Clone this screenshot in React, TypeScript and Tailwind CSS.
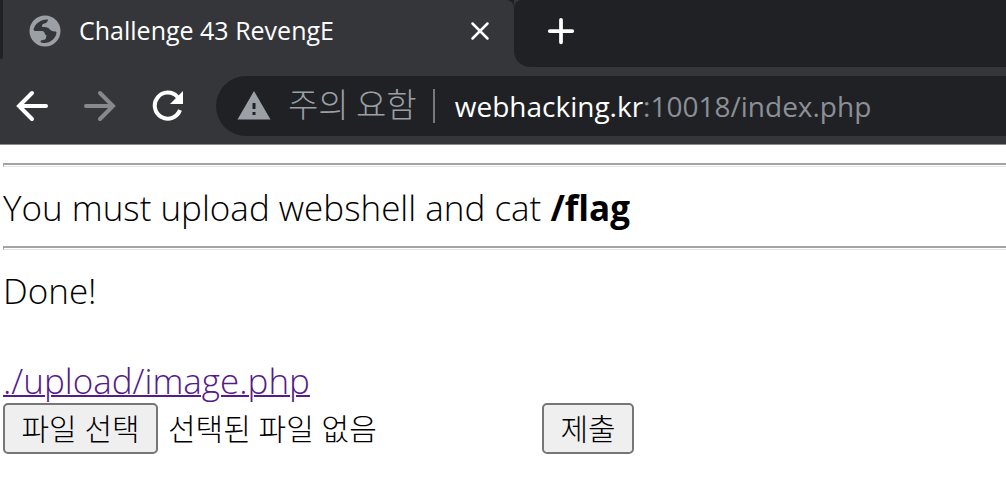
import { useRef, useState } from "react";
import { MdWarning } from "react-icons/md";

function Globe() {
  return (
    <svg viewBox="0 0 32 32" className="size-8 shrink-0" aria-hidden="true">
      <circle cx="16" cy="16" r="15.5" fill="#9aa0a6" />
      <g fill="#35363a">
        <path d="M19 4.500C12 4 6 8.500 4.500 14.500l1 1.500h7.500c2 0 2.500 1.500 3 3 .5 1.500 2 2 4 1.500 2-.3 4-1.500 7-1.500v-2.500c-2.500 0-5-.5-6-2-1.500-2-4-2.500-7-2.500-1.500 0-1.500-2 0-3 1.500-1 4.500-.5 5-4.500z" />
        <path d="M27.500 17c0 6-6 11-12 11-1.500 0-4-.5-4-1.500 0-1.500 3-1.500 4.500-2s.5-3 2-4.500z" />
      </g>
    </svg>
  );
}

function Icon({ d, className }: { d: string; className: string }) {
  return (
    <svg viewBox="0 0 32 32" className={className} fill="none" stroke="currentColor" strokeWidth="4" aria-hidden="true">
      <path d={d} strokeLinecap="round" />
    </svg>
  );
}

function Reload() {
  return (
    <svg viewBox="0 0 32 32" className="size-8" aria-hidden="true">
      <path d="M28 20A13 13 0 1 1 25.500 7" fill="none" stroke="currentColor" strokeWidth="4" />
      <path d="M31 1v13H18z" fill="currentColor" />
    </svg>
  );
}

export default function App() {
  const fileRef = useRef<HTMLInputElement>(null);
  const [fileName, setFileName] = useState("선택된 파일 없음");

  return (
    <div className="min-h-screen overflow-hidden bg-white font-['Noto_Sans_CJK_KR',sans-serif] text-black">
      <header className="bg-[#35363a]">
        <div className="flex h-[67px] bg-[#202124]">
          <div className="flex w-[514px] rounded-tr-lg bg-[#35363a]">
            <div className="mb-2 w-[3px] rounded-br-lg bg-[#202124]" />
            <div className="flex grow items-center pr-6 pb-1.5 pl-[26px] text-white">
              <Globe />
              <span className="ml-[18px] grow font-['Open_Sans',sans-serif] text-[25px] font-medium">
                Challenge 43 RevengE
              </span>
              <button aria-label="Close tab">
                <Icon d="M4 4l24 24M28 4L4 28" className="size-5" />
              </button>
            </div>
          </div>
          <div className="flex grow bg-[#35363a]">
            <div className="flex grow items-center rounded-tl-lg rounded-bl-2xl bg-[#202124] pb-1.5 pl-8 text-white">
              <button aria-label="New tab">
                <Icon d="M16 4v24M4 16h24" className="size-[30px]" />
              </button>
            </div>
          </div>
        </div>
        <nav className="flex h-[78px] items-center border-b border-[#8a8b8e] pl-4 text-white">
          <button aria-label="Back">
            <Icon d="M16 3L3 16l13 13M3 16h27" className="size-8" />
          </button>
          <button aria-label="Forward" className="ml-9 text-[#88898c]">
            <Icon d="M16 3l13 13-13 13M29 16H2" className="size-8" />
          </button>
          <button aria-label="Reload" className="ml-9">
            <Reload />
          </button>
          <div className="ml-8 flex h-[60px] grow items-center rounded-l-full bg-[#202124] pl-5 text-[33px] whitespace-nowrap">
            <MdWarning className="size-9 text-[#9aa0a6]" />
            <span className="ml-4 pb-1 font-light text-[#9aa0a6]">주의 요함</span>
            <span className="mr-5 ml-4 h-[34px] w-0.5 bg-[#75797e]" />
            <span className="font-['Open_Sans',sans-serif] text-[28px] text-[#8b9096]">
              <span className="font-medium text-white">webhacking.kr</span>:10018/index.php
            </span>
          </div>
        </nav>
      </header>

      <main className="pl-[3px] font-['Open_Sans','Noto_Sans_CJK_KR',sans-serif] text-[35px] leading-[45px] font-light">
        <hr className="mt-[18px] h-1 border-t-2 border-b border-l border-t-[#a4a4a4] border-b-[#e4e4e4] border-l-[#a4a4a4]" />
        <p className="pt-[18px] pb-4">
          You must upload webshell and cat <b className="font-bold">/flag</b>
        </p>
        <hr className="h-1 border-t-2 border-b border-l border-t-[#a4a4a4] border-b-[#e4e4e4] border-l-[#a4a4a4]" />
        <p className="pt-[18px]">Done!</p>
        <br />
        <a href="./upload/image.php" className="block text-[#551a8b] underline decoration-2">
          ./upload/image.php
        </a>
        <form className="flex items-center text-[30px]" onSubmit={(e) => e.preventDefault()}>
          <input
            ref={fileRef}
            type="file"
            aria-label="파일 선택"
            className="hidden"
            onChange={(e) => setFileName(e.target.files?.[0]?.name ?? "선택된 파일 없음")}
          />
          <button
            type="button"
            className="h-[51px] w-[155px] rounded-[5px] border-2 border-[#767676] bg-[#efefef]"
            onClick={() => fileRef.current?.click()}
          >
            파일 선택
          </button>
          <span className="ml-2.5 w-[374px] truncate">{fileName}</span>
          <button className="h-[51px] w-[92px] rounded-[5px] border-2 border-[#767676] bg-[#efefef]">제출</button>
        </form>
      </main>
    </div>
  );
}
